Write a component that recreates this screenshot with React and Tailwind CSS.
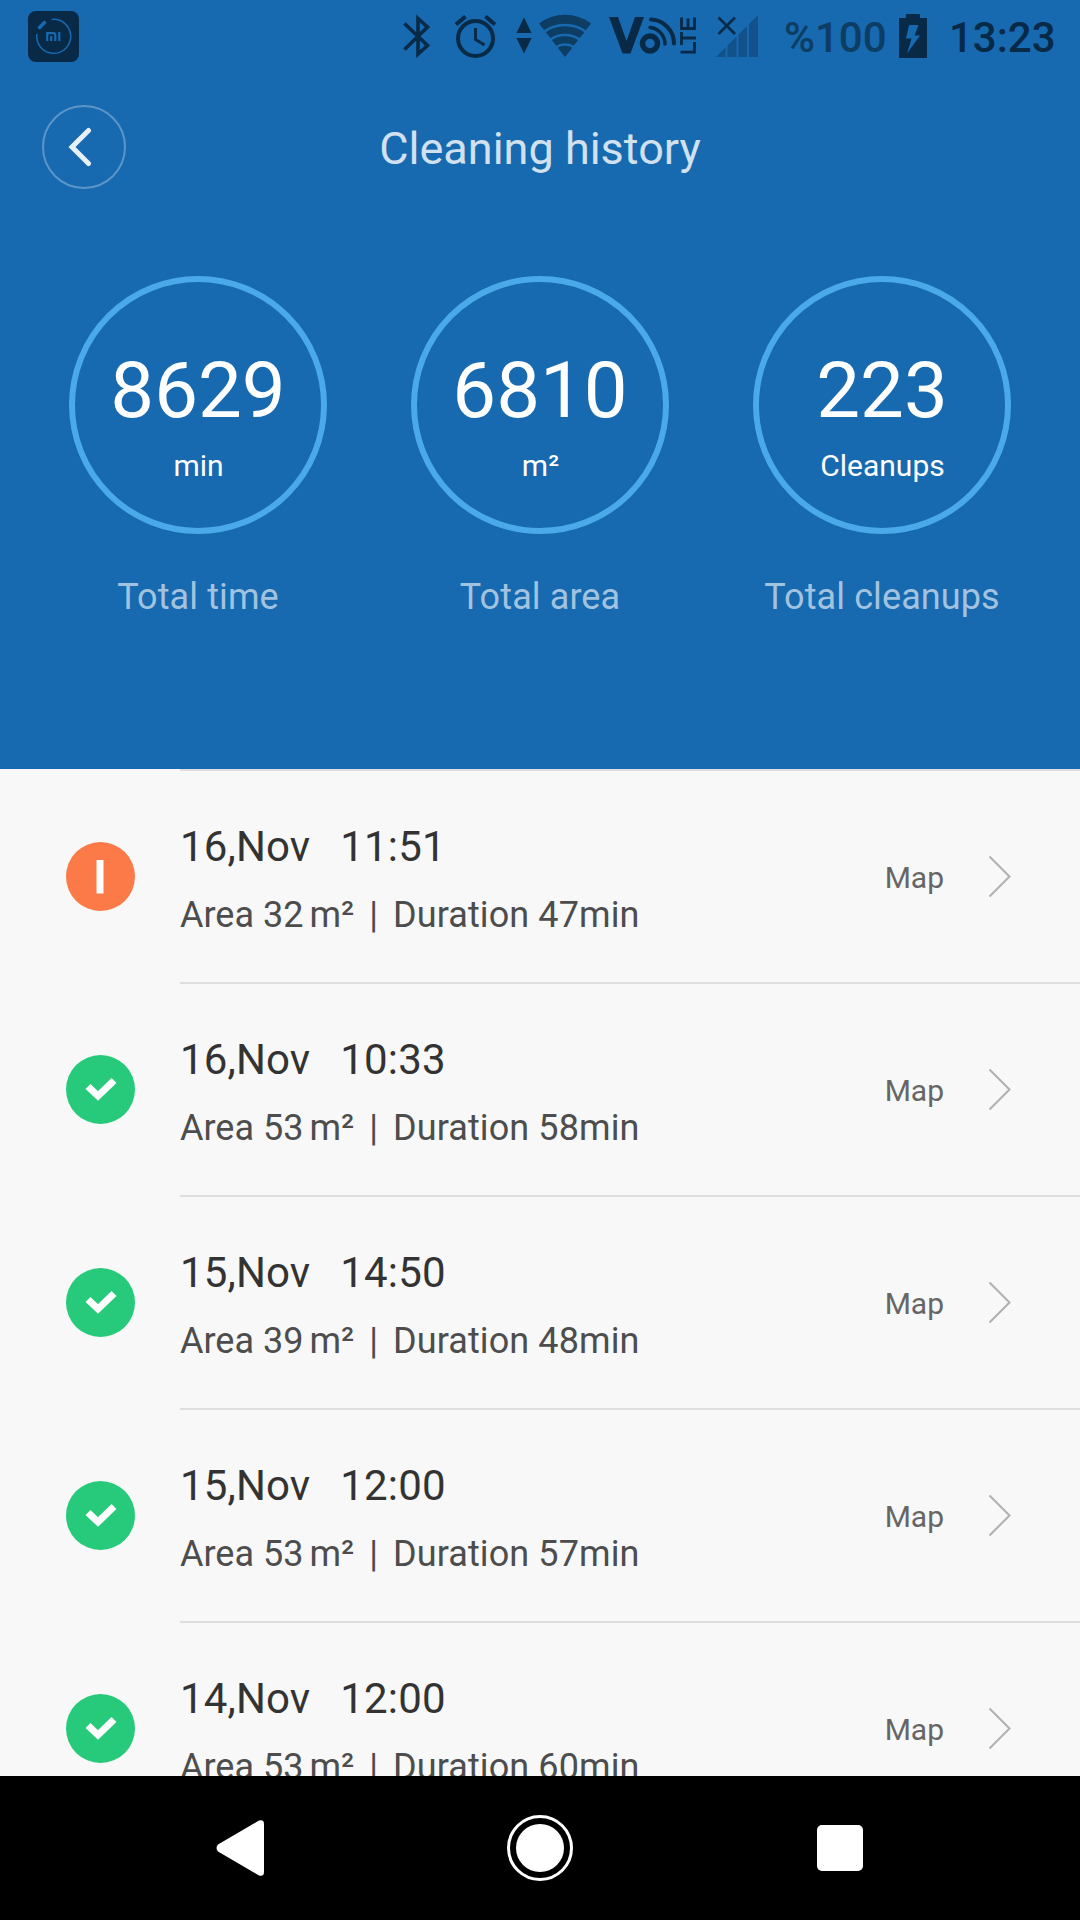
import React from 'react';

const stats = [
    { value: '8629', unit: 'min', label: 'Total time' },
    { value: '6810', unit: 'm²', label: 'Total area' },
    { value: '223', unit: 'Cleanups', label: 'Total cleanups' },
];

const records = [
    { id: 1, date: '16,Nov', time: '11:51', area: 32, duration: 47, done: false },
    { id: 2, date: '16,Nov', time: '10:33', area: 53, duration: 58, done: true },
    { id: 3, date: '15,Nov', time: '14:50', area: 39, duration: 48, done: true },
    { id: 4, date: '15,Nov', time: '12:00', area: 53, duration: 57, done: true },
    { id: 5, date: '14,Nov', time: '12:00', area: 53, duration: 60, done: true },
];

const MiHomeIcon = () => (
    <svg width="51" height="51" viewBox="0 0 51 51" fill="none">
        <rect width="51" height="51" rx="8" fill="#082a47" />
        <path d="M23.5 8.5A17 17 0 1 1 8.9 23" stroke="#1769b0" strokeWidth="1.5" />
        <path d="M11.5 16.5l5-5" stroke="#1769b0" strokeWidth="3.5" strokeLinecap="round" />
        <path d="M19.2 30v-7.8h6.3q1.8 0 1.8 1.8v6M23.2 30v-5M31.3 30v-9" stroke="#1769b0" strokeWidth="2.2" />
    </svg>
);

const BluetoothIcon = () => (
    <svg width="28" height="44" viewBox="0 0 28 44" fill="none" stroke="#082a47" strokeWidth="3.6">
        <path d="M1.5 9.5L24.5 31.5L15 40V4.5L24.5 13L1.5 35.5" />
    </svg>
);

const AlarmIcon = () => (
    <svg width="42" height="44" viewBox="0 0 42 44" fill="none" stroke="#082a47">
        <circle cx="20.5" cy="24.5" r="17.5" strokeWidth="4" />
        <path d="M20.5 14v11.5l9 5.5" strokeWidth="3" />
        <path d="M1 10.5l9.5-8M30.5 2.5l9.5 8" strokeWidth="4" />
    </svg>
);

const WifiIcon = () => (
    <svg width="76" height="44" viewBox="0 0 76 44">
        <path d="M8 3.5l7.5 15.5H.5zM8 39.5L.5 24h15z" fill="#082a47" />
        <path d="M23 9.5a43 43 0 0 1 52 0L49 43z" fill="#0d3d63" />
        <g fill="none" stroke="#1769b0" strokeWidth="2.6">
            <path d="M27 18.5a36 36 0 0 1 44 0" />
            <path d="M33 26.5a26 26 0 0 1 32 0" />
            <path d="M39 34a16 16 0 0 1 20 0" />
        </g>
    </svg>
);

const VolteIcon = () => (
    <svg width="88" height="44" viewBox="0 0 88 44" fill="none" stroke="#082a47">
        <path d="M0 3h9l8.5 24L26 3h9L21.5 39.5h-8z" fill="#082a47" stroke="none" />
        <circle cx="41" cy="29.5" r="7.5" strokeWidth="5.5" />
        <path d="M41 13.5A16.5 16.5 0 0 1 56 30" strokeWidth="3.5" strokeLinecap="round" />
        <path d="M42 5.5A24 24 0 0 1 65 29.5" strokeWidth="4" strokeLinecap="round" />
        <g strokeWidth="2.8">
            <path d="M71.5 38.2h14V28" />
            <path d="M72.5 31v-13M72.5 24H87" />
            <path d="M72.5 3.5v11h13V3.5M79 14V4.5" />
        </g>
    </svg>
);

const SignalIcon = () => (
    <svg width="42" height="44" viewBox="0 0 42 44">
        <path d="M0 43l9.5-9.5V43zM11.5 31.5l9-9V43h-9zM22.5 20.5l8.5-8.5v31h-8.5zM33 10l9-9v42h-9z" fill="#125189" />
        <path d="M2.5 3.5l16.5 16.5M19 3.5L2.5 20" stroke="#082a47" strokeWidth="2.5" />
    </svg>
);

const BatteryIcon = () => (
    <svg width="28" height="44" viewBox="0 0 28 44">
        <path d="M7 0h14v4h7v40H0V4h7z" fill="#082a47" />
        <path d="M10 11h9.5l-4 10.5H21L8 39.5l4.5-15H7z" fill="#1769b0" />
    </svg>
);

const StatusBar = () => (
    <div className="flex h-[72px] items-start pl-7 pt-[14px]">
        <div className="-mt-[3px]">
            <MiHomeIcon />
        </div>
        <div className="ml-[324px]">
            <BluetoothIcon />
        </div>
        <div className="ml-6">
            <AlarmIcon />
        </div>
        <div className="ml-[19px]">
            <WifiIcon />
        </div>
        <div className="ml-[17px]">
            <VolteIcon />
        </div>
        <div className="ml-[19px]">
            <SignalIcon />
        </div>
        <div className="ml-[26px] w-[115px] whitespace-nowrap pt-px text-[42px] font-medium leading-[46px] text-[#0d3d63]">%100</div>
        <BatteryIcon />
        <div className="ml-[22px] whitespace-nowrap pt-px text-[42px] font-medium leading-[46px] text-[#082a47]">13:23</div>
    </div>
);

const TitleBar = () => (
    <div className="mt-[33px] grid h-[84px] grid-cols-[84px_1fr_84px] items-center px-[42px]">
        <button className="flex size-[84px] items-center justify-center rounded-full border-2 border-[#5c96c8]">
            <svg width="24" height="40" viewBox="0 0 24 40" fill="none" className="mr-2">
                <path d="M20.5 3.5L4 20l16.5 16.5" stroke="#e8f0f7" strokeWidth="5" strokeLinecap="round" />
            </svg>
        </button>
        <h1 className="pt-1 text-center text-[45px] leading-[54px] text-[#d1e1ef]">Cleaning history</h1>
    </div>
);

const Stat = ({ value, unit, label }) => (
    <div className="flex flex-col items-center">
        <div className="flex size-[258px] flex-col items-center rounded-full border-6 border-[#4aa9e9] pt-[63px] text-white">
            <div className="text-[78px] leading-[92px]">{value}</div>
            <div className="mt-[11px] pl-px text-[30px] leading-9">{unit}</div>
        </div>
        <div className="mt-[42px] text-4xl leading-[42px] tracking-[0.1px] text-[#a2c3df]">{label}</div>
    </div>
);

const StatusBadge = ({ done }) => (
    <svg width="69" height="69" viewBox="0 0 69 69" fill="none">
        <circle cx="34.5" cy="34.5" r="34.5" fill={done ? '#27ca7b' : '#fc7a47'} />
        {done ? (
            <path d="M22 31.5l10 9.5L48 25.5" stroke="#fff" strokeWidth="7" />
        ) : (
            <path d="M34 18v33.5" stroke="#fff" strokeWidth="7" />
        )}
    </svg>
);

const RecordRow = ({ record }) => (
    <div className="flex h-[213px] shrink-0">
        <div className="flex w-[180px] items-center pl-[66px] pt-0.5">
            <StatusBadge done={record.done} />
        </div>
        <div className="flex flex-1 items-center border-t-2 border-[#dedede] pr-[68px]">
            <div className="flex-1 self-start whitespace-nowrap pt-[51px]">
                <div className="text-[42px] leading-[50px] tracking-[0.15px] text-[#333333]">
                    <span className="mr-[30px]">{record.date}</span>
                    {record.time}
                </div>
                <div className="mt-[22px] text-4xl leading-[42px] text-[#4d4d4d]">
                    Area {record.area}
                    <span className="ml-1.5">m²</span>
                    <span className="mx-[15px]">|</span>
                    <span className="tracking-[0.1px]">Duration {record.duration}min</span>
                </div>
            </div>
            <span className="pt-[3px] text-[30px] leading-9 text-[#666666]">Map</span>
            <svg width="24" height="42" viewBox="0 0 24 42" fill="none" className="ml-[44px]">
                <path d="M1.5 .5L21.500 20.5l-20 20" stroke="#b0b0b0" strokeWidth="2" />
            </svg>
        </div>
    </div>
);

const NavBar = () => (
    <div className="grid h-36 grid-cols-3 place-items-center bg-black px-[90px]">
        <svg width="48" height="56" viewBox="0 0 48 56" fill="#fff">
            <path d="M43 .6L2 24.5Q-1 28 2 31.5L43 55.4Q48 57 48 52V4Q48-1 43 .6z" />
        </svg>
        <div className="flex size-[66px] items-center justify-center rounded-full border-3 border-white">
            <div className="size-12 rounded-full bg-white" />
        </div>
        <div className="size-[46px] rounded-[5px] bg-white" />
    </div>
);

const App = () => {
    return (
        <div className="flex h-[1920px] w-[1080px] flex-col overflow-hidden bg-[#f8f8f8] font-[Roboto,sans-serif]">
            <header className="h-[769px] shrink-0 bg-[#1769b0]">
                <StatusBar />
                <TitleBar />
                <div className="mt-[87px] grid grid-cols-3 px-[27px]">
                    {stats.map((stat) => (
                        <Stat key={stat.label} {...stat} />
                    ))}
                </div>
            </header>
            <main className="flex min-h-0 flex-1 flex-col overflow-hidden">
                {records.map((record) => (
                    <RecordRow key={record.id} record={record} />
                ))}
            </main>
            <NavBar />
        </div>
    );
};

export default App;
